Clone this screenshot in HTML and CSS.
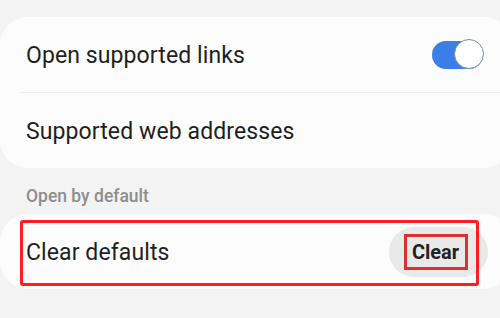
FILE: index.html
```html
<!DOCTYPE html>
<html>
<head>
<meta charset="utf-8">
<link rel="stylesheet" href="styles.css">
</head>
<body>
<div class="page">
  <div class="card">
    <div class="row">
      <span class="label">Open supported links</span>
      <span class="switch"><span class="thumb"></span></span>
    </div>
    <div class="divider"></div>
    <div class="row">
      <span class="label">Supported web addresses</span>
    </div>
  </div>
  <div class="section">Open by default</div>
  <div class="card card2">
    <div class="row">
      <span class="label">Clear defaults</span>
      <span class="pill"><span class="clear">Clear</span></span>
    </div>
    <div class="mark"></div>
  </div>
</div>
</body>
</html>
```
FILE: styles.css
```css
html, body { margin: 0; padding: 0; }
body {
  width: 500px;
  height: 318px;
  overflow: hidden;
  background: #f3f3f3;
  font-family: Roboto, "Noto Sans", sans-serif;
  color: #1f1f1f;
}
.page {
  padding-top: 17px;
  width: 512px;
}
.card {
  background: #fcfcfc;
  border-radius: 28px;
  position: relative;
}
.row {
  height: 75px;
  display: flex;
  align-items: center;
  justify-content: space-between;
  padding: 2px 26px 0 26px;
  box-sizing: border-box;
}
.label {
  font-size: 23px;
  letter-spacing: 0.1px;
}
.divider {
  height: 1px;
  background: #ececec;
  margin: 0 12px 0 20px;
}
.switch {
  width: 51px;
  height: 28px;
  border-radius: 14px;
  background: #3a7ee6;
  position: relative;
  margin-right: 3px;
  margin-top: -2px;
}
.thumb {
  position: absolute;
  right: -1px;
  top: -2px;
  width: 28px;
  height: 28px;
  border-radius: 50%;
  background: #fff;
  border: 1.5px solid #7a8aa8;
}
.section {
  height: 46px;
  box-sizing: border-box;
  padding: 18px 0 0 26px;
  font-size: 17.5px;
  font-weight: 500;
  color: #8d8d8d;
}
.card2 .row { padding-right: 26px; }
.pill {
  width: 99px;
  height: 50px;
  border-radius: 25px;
  background: #e9e9e9;
  display: flex;
  align-items: center;
  justify-content: center;
  margin-right: -2px;
  margin-top: -2px;
}
.clear {
  box-sizing: border-box;
  width: 64px;
  height: 36px;
  border: 3px solid #d8322c;
  display: flex;
  align-items: center;
  justify-content: center;
  font-size: 20px;
  font-weight: 700;
  color: #222;
  margin-left: -6px;
}
.mark {
  position: absolute;
  left: 20px;
  top: 6px;
  width: 459px;
  height: 66px;
  box-sizing: border-box;
  border: 3px solid #ff1d1d;
  border-radius: 3px;
}
```
